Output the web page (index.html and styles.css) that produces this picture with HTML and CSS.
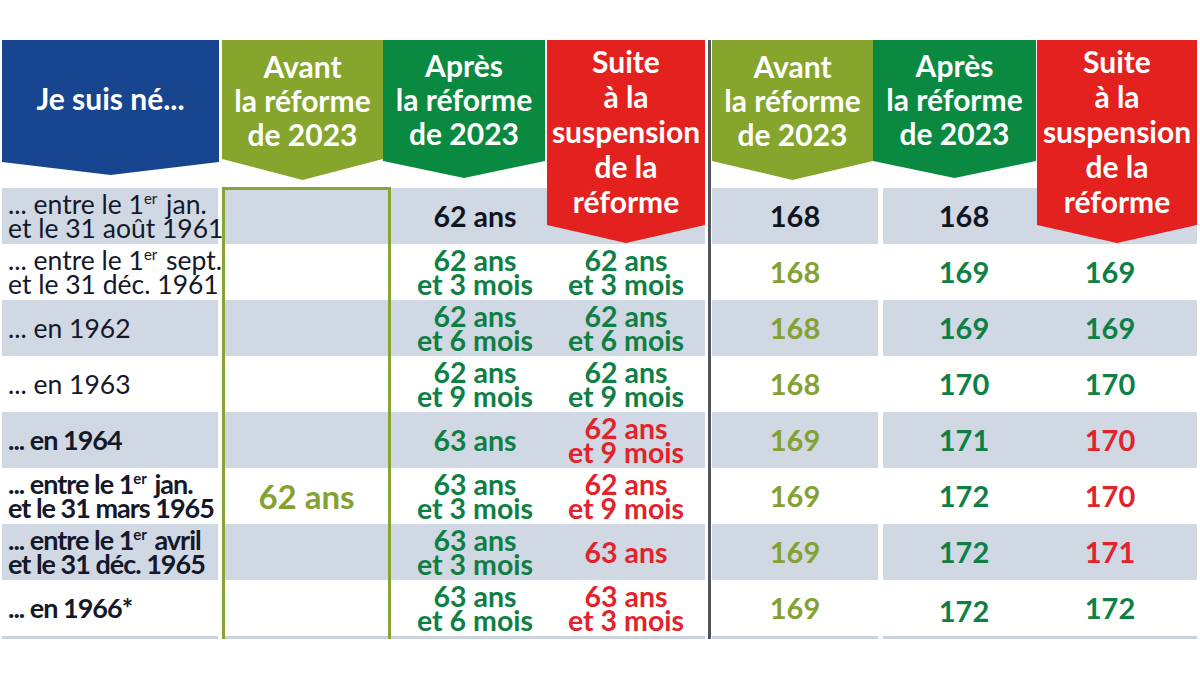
FILE: index.html
```html
<!DOCTYPE html>
<html lang="fr">
<head>
<meta charset="utf-8">
<title>Âge de départ</title>
<link rel="stylesheet" href="styles.css">
</head>
<body>
<div class="table">
  <div class="hd hd-blue">Je suis né...</div>
  <div class="hd hd-olive-l">Avant<br>la réforme<br>de 2023</div>
  <div class="hd hd-green-l">Après<br>la réforme<br>de 2023</div>
  <div class="hd hd-red hd-red-l">Suite<br>à la<br>suspension<br>de la<br>réforme</div>
  <div class="sep"></div>
  <div class="hd hd-olive-r">Avant<br>la réforme<br>de 2023</div>
  <div class="hd hd-green-r">Après<br>la réforme<br>de 2023</div>
  <div class="hd hd-red hd-red-r">Suite<br>à la<br>suspension<br>de la<br>réforme</div>

  <div class="row r1 grey">
    <div class="cell c1 label"><span>... entre le 1<sup>er</sup> jan.<br>et le 31 août 1961</span></div>
    <div class="cell c3"></div>
    <div class="cell c4 k"><span>62 ans</span></div>
    <div class="cell c5"></div>
    <div class="cell c7 n k"><span>168</span></div>
    <div class="cell c8 n k"><span>168</span></div>
    <div class="cell c9"></div>
  </div>
  <div class="row r2">
    <div class="cell c1 label"><span>... entre le 1<sup>er</sup> sept.<br>et le 31 déc. 1961</span></div>
    <div class="cell c3"></div>
    <div class="cell c4 g"><span>62 ans<br>et 3 mois</span></div>
    <div class="cell c5 g"><span>62 ans<br>et 3 mois</span></div>
    <div class="cell c7 n o"><span>168</span></div>
    <div class="cell c8 n g"><span>169</span></div>
    <div class="cell c9 n g"><span>169</span></div>
  </div>
  <div class="row r3 grey">
    <div class="cell c1 label"><span>... en 1962</span></div>
    <div class="cell c3"></div>
    <div class="cell c4 g"><span>62 ans<br>et 6 mois</span></div>
    <div class="cell c5 g"><span>62 ans<br>et 6 mois</span></div>
    <div class="cell c7 n o"><span>168</span></div>
    <div class="cell c8 n g"><span>169</span></div>
    <div class="cell c9 n g"><span>169</span></div>
  </div>
  <div class="row r4">
    <div class="cell c1 label"><span>... en 1963</span></div>
    <div class="cell c3"></div>
    <div class="cell c4 g"><span>62 ans<br>et 9 mois</span></div>
    <div class="cell c5 g"><span>62 ans<br>et 9 mois</span></div>
    <div class="cell c7 n o"><span>168</span></div>
    <div class="cell c8 n g"><span>170</span></div>
    <div class="cell c9 n g"><span>170</span></div>
  </div>
  <div class="row r5 grey">
    <div class="cell c1 label b"><span>... en 1964</span></div>
    <div class="cell c3"></div>
    <div class="cell c4 g"><span>63 ans</span></div>
    <div class="cell c5 rd"><span>62 ans<br>et 9 mois</span></div>
    <div class="cell c7 n o"><span>169</span></div>
    <div class="cell c8 n g"><span>171</span></div>
    <div class="cell c9 n rd"><span>170</span></div>
  </div>
  <div class="row r6">
    <div class="cell c1 label b"><span>... entre le 1<sup>er</sup> jan.<br>et le 31 mars 1965</span></div>
    <div class="cell c3 o big"><span>62 ans</span></div>
    <div class="cell c4 g"><span>63 ans<br>et 3 mois</span></div>
    <div class="cell c5 rd"><span>62 ans<br>et 9 mois</span></div>
    <div class="cell c7 n o"><span>169</span></div>
    <div class="cell c8 n g"><span>172</span></div>
    <div class="cell c9 n rd"><span>170</span></div>
  </div>
  <div class="row r7 grey">
    <div class="cell c1 label b"><span>... entre le 1<sup>er</sup> avril<br>et le 31 déc. 1965</span></div>
    <div class="cell c3"></div>
    <div class="cell c4 g"><span>63 ans<br>et 3 mois</span></div>
    <div class="cell c5 rd"><span>63 ans</span></div>
    <div class="cell c7 n o"><span>169</span></div>
    <div class="cell c8 n g"><span>172</span></div>
    <div class="cell c9 n rd"><span>171</span></div>
  </div>
  <div class="row r8">
    <div class="cell c1 label b"><span>... en 1966*</span></div>
    <div class="cell c3"></div>
    <div class="cell c4 g"><span>63 ans<br>et 6 mois</span></div>
    <div class="cell c5 rd"><span>63 ans<br>et 3 mois</span></div>
    <div class="cell c7 n o"><span>169</span></div>
    <div class="cell c8 n g low"><span>172</span></div>
    <div class="cell c9 n g"><span>172</span></div>
  </div>
  <div class="row r9 strip">
    <div class="cell c1"></div>
    <div class="cell c3"></div>
    <div class="cell c4"></div>
    <div class="cell c5"></div>
    <div class="cell c7"></div>
    <div class="cell c8"></div>
    <div class="cell c9"></div>
  </div>

  <div class="avant-box"></div>
</div>
</body>
</html>
```

FILE: styles.css
```css
* {
  box-sizing: border-box;
  margin: 0;
  padding: 0;
}

html, body {
  background: #ffffff;
}

body {
  width: 1200px;
  height: 680px;
  overflow: hidden;
  font-family: "Lato", "Open Sans", sans-serif;
  color: #15182a;
}

.table {
  display: grid;
  grid-template-columns: 216px 4px 169px 156px 158px 7px 166px 159px 160px;
  grid-template-rows: 148px repeat(8, 56px) 3px;
  margin: 40px 0 0 2px;
}

/* ---------- headers ---------- */
.hd {
  grid-row: 1;
  align-self: start;
  color: #ffffff;
  font-weight: 700;
  font-size: 30px;
  line-height: 34px;
  text-align: center;
  white-space: nowrap;
}

.hd-blue {
  grid-column: 1;
  margin-right: -1px;
  height: 135px;
  padding-top: 41px;
  background: #17458f;
  clip-path: polygon(0 0, 100% 0, 100% 122px, 50% 100%, 0 122px);
}

.hd-olive-l {
  grid-column: 3;
  margin-right: 8px;
  height: 140px;
  padding-top: 9px;
  background: #86a52c;
  clip-path: polygon(0 0, 100% 0, 100% 119px, 50% 100%, 0 119px);
}

.hd-green-l {
  grid-column: 4;
  margin-left: -8px;
  margin-right: 2px;
  height: 138px;
  padding-top: 8px;
  background: #0a8a40;
  clip-path: polygon(0 0, 100% 0, 100% 121px, 50% 100%, 0 121px);
}

.hd-red {
  grid-row: 1 / 3;
  z-index: 2;
  height: 203px;
  padding-top: 4px;
  line-height: 35px;
  background: #e3211f;
  clip-path: polygon(0 0, 100% 0, 100% 185px, 50% 100%, 0 185px);
}

.hd-red-l {
  grid-column: 5;
}

.hd-olive-r {
  grid-column: 7;
  margin-right: 5px;
  height: 140px;
  padding-top: 9px;
  background: #86a52c;
  clip-path: polygon(0 0, 100% 0, 100% 121px, 50% 100%, 0 121px);
}

.hd-green-r {
  grid-column: 8;
  margin-left: -5px;
  margin-right: 1px;
  height: 138px;
  padding-top: 8px;
  background: #0a8a40;
  clip-path: polygon(0 0, 100% 0, 100% 121px, 50% 100%, 0 121px);
}

.hd-red-r {
  grid-column: 9;
}

/* ---------- separator ---------- */
.sep {
  grid-column: 6;
  grid-row: 1 / 11;
  display: flex;
}

.sep::before {
  content: "";
  width: 3px;
  margin-left: 3px;
  background: #51555c;
}

/* ---------- body ---------- */
.row {
  display: contents;
}

.r1 > * { grid-row: 2; }
.r2 > * { grid-row: 3; }
.r3 > * { grid-row: 4; }
.r4 > * { grid-row: 5; }
.r5 > * { grid-row: 6; }
.r6 > * { grid-row: 7; }
.r7 > * { grid-row: 8; }
.r8 > * { grid-row: 9; }
.r9 > * { grid-row: 10; }

.grey > .cell {
  background: #d0d8e4;
}

.strip > .cell {
  background: #c9d1dc;
}

.c1 { grid-column: 1; }
.c3 { grid-column: 3; }
.c4 { grid-column: 4; padding-left: 12px; }
.c5 { grid-column: 5; }
.c7 { grid-column: 7; }
.c8 { grid-column: 8; margin-left: 5px; padding-left: 8px; }
.c9 { grid-column: 9; padding-right: 14px; }

.cell {
  display: flex;
  align-items: center;
  justify-content: center;
  text-align: center;
  font-weight: 700;
  font-size: 28.5px;
  line-height: 24px;
  white-space: nowrap;
}

.label {
  justify-content: flex-start;
  text-align: left;
  padding-left: 6px;
  font-weight: 400;
  font-size: 26.5px;
  line-height: 24px;
  color: #15182a;
}

.label.b {
  font-weight: 700;
  font-size: 27px;
  letter-spacing: -1px;
}

.label sup {
  font-size: 15px;
  line-height: 0;
  vertical-align: 10px;
  letter-spacing: 0;
  margin-right: 2px;
}

.n {
  font-size: 29px;
}

.big {
  font-size: 33px;
}

.low {
  padding-top: 6px;
}

.k { color: #111522; }
.g { color: #0f7f45; }
.o { color: #84a233; }
.rd { color: #e2232b; }

/* ---------- "avant" outline ---------- */
.avant-box {
  grid-column: 3;
  grid-row: 2 / 11;
  margin-top: -1px;
  border: 3px solid #87a534;
  border-bottom: none;
  z-index: 1;
  pointer-events: none;
}
```
